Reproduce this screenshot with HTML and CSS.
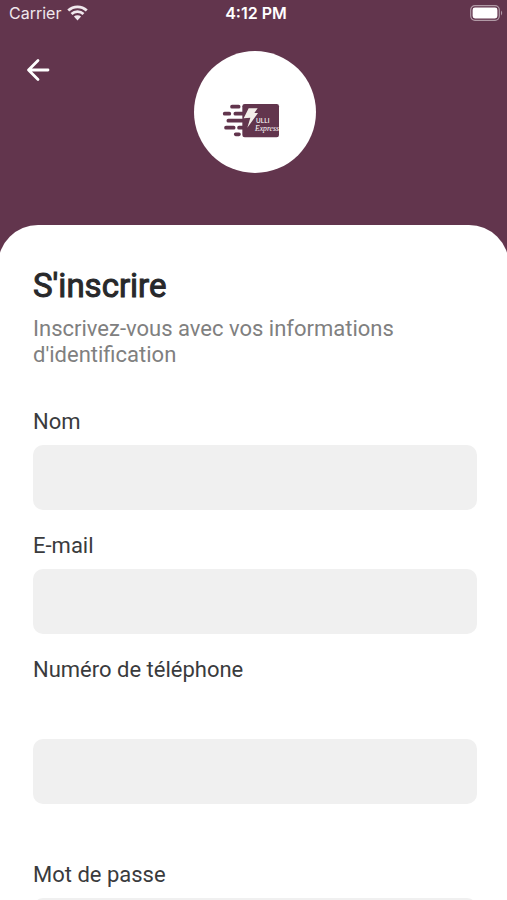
FILE: index.html
```html
<!DOCTYPE html>
<html lang="fr">
<head>
<meta charset="utf-8">
<meta name="viewport" content="width=device-width, initial-scale=1">
<title>S'inscrire</title>
<link rel="stylesheet" href="styles.css">
</head>
<body>
<div class="status">
  <div class="carrier">
    <span>Carrier</span>
    <svg class="wifi" viewBox="0 0 20 15" aria-hidden="true">
      <path d="M1.2 5.2a12.6 12.6 0 0 1 17.6 0M4.3 8.5a8.2 8.2 0 0 1 11.4 0" fill="none" stroke="currentColor" stroke-width="2.6"/>
      <path d="M6.6 10.9a4.9 4.9 0 0 1 6.8 0L10 14.6z" fill="currentColor"/>
    </svg>
  </div>
  <time class="clock">4:12 PM</time>
  <svg class="battery" viewBox="0 0 33 16" aria-hidden="true">
    <rect x=".7" y=".7" width="28.6" height="14.6" rx="4.2" fill="none" stroke="currentColor" stroke-opacity=".5" stroke-width="1.2"/>
    <rect x="2.6" y="2.6" width="24.8" height="10.8" rx="2.4" fill="currentColor"/>
    <path d="M31 5.5q2.4 2.5 0 5z" fill="currentColor" fill-opacity=".5"/>
  </svg>
</div>
<header class="header">
  <button class="back" type="button" aria-label="Retour">
    <svg viewBox="0 0 24 24" aria-hidden="true"><path d="M12 2.500 2.500 12l9.500 9.500M3 12H22" fill="none" stroke="currentColor" stroke-width="2.800" stroke-linecap="round" stroke-linejoin="round"/></svg>
  </button>
  <div class="logo">
    <svg viewBox="27 18 366 366" role="img" aria-label="Ulli Express">
      <g fill="none" stroke="#62354d" stroke-width="11" stroke-linecap="round">
        <path d="M141 185h20M119 206h14M151 206h24M130 227h42M123 248h23M162 248h12M152 268h10"/>
      </g>
      <rect x="172" y="177" width="110" height="100" rx="7" fill="#62354d"/>
      <path d="M191 190h27l-10 14h11l-32 44 9-30-20 2z" fill="#f3eee9"/>
      <text class="logo-name" x="213" y="235">ULLI</text>
      <text class="logo-tag" x="210" y="259">Express</text>
    </svg>
  </div>
</header>
<main class="sheet">
  <h1 class="title">S'inscrire</h1>
  <p class="subtitle">Inscrivez-vous avec vos informations d'identification</p>
  <form class="form">
    <div class="field">
      <label for="name">Nom</label>
      <input id="name" type="text">
    </div>
    <div class="field">
      <label for="email">E-mail</label>
      <input id="email" type="email">
    </div>
    <div class="field field-phone">
      <label for="phone">Numéro de téléphone</label>
      <input id="phone" type="tel">
    </div>
    <div class="field">
      <label for="password">Mot de passe</label>
      <input id="password" type="password">
    </div>
  </form>
</main>
</body>
</html>
```
FILE: styles.css
```css
* {
  box-sizing: border-box;
}

body {
  margin: 0;
  height: 100vh;
  display: flex;
  flex-direction: column;
  overflow: hidden;
  background: #62354d;
  color: #3a3b3d;
  font-family: Roboto, "Liberation Sans", sans-serif;
}

.status {
  display: grid;
  grid-template-columns: 1fr auto 1fr;
  align-items: center;
  height: 26px;
  padding: 0 4px 0 9px;
  color: #fff;
  font-family: Inter, "Liberation Sans", sans-serif;
  font-size: 16px;
  line-height: 26px;
}

.carrier {
  display: flex;
  align-items: center;
  gap: 6px;
  color: #f0e8ed;
}

.wifi {
  width: 21px;
  height: 16px;
}

.clock {
  font-weight: 600;
}

.battery {
  justify-self: end;
  width: 33px;
  height: 16px;
}

.header {
  display: grid;
  grid-template-columns: 1fr auto 1fr;
  align-items: start;
  padding: 25px 24px 52px 26px;
}

.back {
  display: flex;
  width: 24px;
  height: 24px;
  margin-top: 7px;
  padding: 0;
  border: 0;
  background: none;
  color: #fff;
}

.logo {
  width: 122px;
  height: 122px;
  border-radius: 50%;
  background: #fff;
}

.logo svg {
  display: block;
}

.logo-name {
  fill: #fff;
  font: 500 19px Inter, sans-serif;
}

.logo-tag {
  fill: #fff;
  font: italic 23px "Liberation Serif", serif;
}

.sheet {
  flex: 1;
  min-height: 0;
  overflow-y: auto;
  scrollbar-width: none;
  margin: 0 -2px;
  padding: 41px 32px 40px 35px;
  border-radius: 40px 40px 0 0;
  background: #fff;
}

.title {
  margin: 0 0 10px;
  color: #28292b;
  font-size: 33px;
  font-weight: 400;
  line-height: 40px;
  -webkit-text-stroke: 1px currentColor;
}

.subtitle {
  margin: 0 0 40px;
  color: #808080;
  font-size: 22px;
  line-height: 26px;
}

.form {
  display: flex;
  flex-direction: column;
  gap: 22px;
}

.field {
  display: flex;
  flex-direction: column;
  gap: 9px;
}

.field-phone {
  gap: 55px;
  margin-bottom: 35px;
}

.field label {
  font-size: 22px;
  line-height: 28px;
}

.field input {
  width: 100%;
  height: 65px;
  padding: 0 16px;
  border: 0;
  border-radius: 10px;
  background: #f0f0f0;
  color: inherit;
  font: inherit;
  font-size: 22px;
}
```
